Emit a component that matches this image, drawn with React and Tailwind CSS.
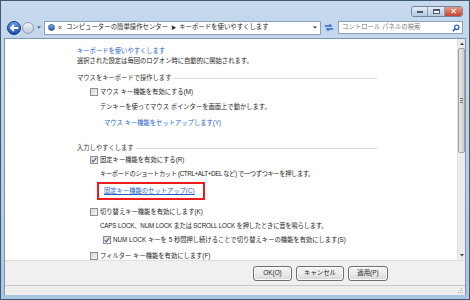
import React from "react";

const F = { fontFamily: '"Liberation Sans", "Noto Sans CJK JP", sans-serif' };

function Cb({ checked }) {
  return (
    <span className="w-[8px] h-[8px] border border-[#8f8f8f] bg-linear-to-br from-[#d6d6d6] to-[#f8f8f8] flex items-center justify-center shrink-0 mr-[2px]">
      {checked && (
        <svg width="6" height="6" viewBox="0 0 6 6">
          <path d="M0.8 3.2 L2.3 4.8 L5.3 0.8" stroke="#4a5f97" strokeWidth="1.1" fill="none" />
        </svg>
      )}
    </span>
  );
}

function Btn({ children, w }) {
  return (
    <div className={`${w} h-[15px] border border-[#707070] rounded-[3px] bg-linear-to-b from-[#f3f3f3] via-[#ebebeb] to-[#d7d7d7] shadow-[inset_0_0_0_1px_#fcfcfc] flex items-center justify-center text-[6.4px] text-[#1a1a1a]`}>
      {children}
    </div>
  );
}

export default function App() {
  return (
    <div style={F} className="w-[470px] h-[300px] overflow-hidden bg-linear-to-b from-[#c6d8ec] via-[#bcd2ea] to-[#a9c6e0] border border-[#3e5a72] flex flex-col text-[#1e1e1e]">
      {/* title bar */}
      <div className="h-[17px] flex items-start justify-end pr-[6px] pt-[5px] shrink-0">
        <div className="flex h-[11px] rounded-[3px] border border-[#6f86a0] overflow-hidden">
          <div className="w-[16px] bg-linear-to-b from-[#e4ecf5] to-[#b7c9dd] flex items-center justify-center border-r border-[#8aa0b8]">
            <div className="w-[6px] h-[2px] bg-[#fff] border border-[#4a5a6c]" />
          </div>
          <div className="w-[17px] bg-linear-to-b from-[#e4ecf5] to-[#b7c9dd] flex items-center justify-center border-r border-[#8aa0b8]">
            <div className="w-[7px] h-[5px] border border-[#4a5a6c] border-t-2 bg-white" />
          </div>
          <div className="w-[17px] bg-linear-to-b from-[#e49a87] to-[#c2412d] flex items-center justify-center text-white text-[8px] font-bold leading-none" style={{ fontFamily: '"DejaVu Sans", sans-serif' }}>
            ✕
          </div>
        </div>
      </div>
      {/* nav row */}
      <div className="h-[19px] flex items-center pl-[6px] pr-[6px] shrink-0">
        <div className="w-[14px] h-[14px] shrink-0 rounded-full bg-[#2f63c6] bg-linear-to-b from-[#6b9be6] to-[#1c4fb0] border border-[#1a3d80] flex items-center justify-center">
          <svg width="9" height="8" viewBox="0 0 9 8">
            <path d="M4 0.8 L1 4 L4 7.2 M1.3 4 H8.2" stroke="white" strokeWidth="1.8" fill="none" />
          </svg>
        </div>
        <div className="w-[12px] h-[12px] shrink-0 rounded-full bg-linear-to-b from-[#f0f4f8] to-[#bcc8d4] border border-[#8da0b3] ml-[1px]" />
        <svg width="6" height="5" viewBox="0 0 6 5" className="ml-[2px] shrink-0">
          <path d="M1 1.5 L3 3.5 L5 1.5 Z" fill="#2a5ab0" />
        </svg>
        <div className="ml-[2px] w-[277px] shrink-0 h-[14px] bg-white border border-[#8da2b8] flex items-center pl-[3px]">
          <div className="w-[7px] h-[7px] rounded-full bg-linear-to-b from-[#7fa8e6] to-[#2b5db8] border border-[#355a9a]" />
          <span className="ml-[3px] text-[7px] text-[#444] leading-none">«</span>
          <span className="ml-[4px] text-[6.4px] whitespace-nowrap leading-none">コンピューターの簡単操作センター</span>
          <span className="ml-[3px] text-[5px] text-[#333] leading-none">▶</span>
          <span className="ml-[3px] text-[6.4px] whitespace-nowrap leading-none">キーボードを使いやすくします</span>
          <div className="flex-1" />
          <svg width="6" height="5" viewBox="0 0 6 5" className="mr-[2px]">
            <path d="M1 1.5 L3 3.5 L5 1.5 Z" fill="#333" />
          </svg>
        </div>
        <div className="w-[16px] h-[14px] shrink-0 flex items-center justify-center">
          <svg width="10" height="9" viewBox="0 0 10 9">
            <path d="M1 3 H7 L5.5 1.3 M9 6 H3 L4.5 7.7" stroke="#2d6bd0" strokeWidth="1.3" fill="none" />
          </svg>
        </div>
        <div className="ml-[1px] flex-1 h-[13px] bg-white border border-[#8da2b8] flex items-center pl-[3px] pr-[2px]">
          <span className="text-[6.4px] text-[#7a7a7a] whitespace-nowrap leading-none">コントロール パネルの検索</span>
          <div className="flex-1" />
          <svg width="8" height="8" viewBox="0 0 8 8">
            <circle cx="4.8" cy="3.2" r="2.2" stroke="#1f55b8" strokeWidth="1.2" fill="none" />
            <path d="M3.2 4.8 L0.8 7.2" stroke="#1f55b8" strokeWidth="1.5" />
          </svg>
        </div>
      </div>
      {/* body */}
      <div className="flex-1 flex flex-col mx-[3px] mt-[1px] border border-[#7f97ad] border-b-0 bg-[#f0f0f0] overflow-hidden">
        <div className="h-[221px] flex shrink-0 bg-white">
          <div className="flex-1 overflow-hidden pl-[72px] pt-[7px] text-[6.3px] leading-[10px] whitespace-nowrap">
            <div className="h-[10px] text-[#1f5fc8]">キーボードを使いやすくします</div>
            <div className="h-[10px]">選択された設定は毎回のログオン時に自動的に開始されます。</div>
            <div className="h-[10px] mt-[7px] w-[300px] flex items-center text-[#333]">
              <span>マウスをキーボードで操作します</span>
              <div className="ml-[2px] flex-1 h-px bg-[#d8dde2]" />
            </div>
            <div className="h-[10px] mt-[4px] ml-[13px] flex items-center"><Cb />マウス キー機能を有効にする(M)</div>
            <div className="h-[10px] mt-[5px] ml-[23px]">テンキーを使ってマウス ポインターを画面上で動かします。</div>
            <div className="h-[10px] mt-[6px] ml-[27px] text-[#1f5fc8]">マウス キー機能をセットアップします(Y)</div>
            <div className="h-[10px] mt-[15px] w-[300px] flex items-center text-[#333]">
              <span>入力しやすくします</span>
              <div className="ml-[2px] flex-1 h-px bg-[#d8dde2]" />
            </div>
            <div className="h-[10px] mt-[2px] ml-[13px] flex items-center"><Cb checked />固定キー機能を有効にする(R)</div>
            <div className="h-[10px] mt-[4px] ml-[23px] tracking-[-0.4px]">キーボードのショートカット (CTRL+ALT+DEL など) で一つずつキーを押します。</div>
            <div className="mt-[3px] ml-[20px] w-[108px] h-[18px] border-2 border-[#ee1c1c] flex items-center pl-[5px]">
              <span className="text-[#1f5fc8] underline leading-[10px]">固定キー機能のセットアップ(C)</span>
            </div>
            <div className="h-[10px] mt-[7px] ml-[13px] flex items-center"><Cb />切り替えキー機能を有効にします(K)</div>
            <div className="h-[10px] mt-[4px] ml-[23px] tracking-[-0.2px]">CAPS LOCK、NUM LOCK または SCROLL LOCK を押したときに音を鳴らします。</div>
            <div className="h-[10px] mt-[4px] ml-[26px] flex items-center"><Cb checked />NUM LOCK キーを 5 秒間押し続けることで切り替えキーの機能を有効にします(S)</div>
            <div className="h-[10px] mt-[6px] ml-[13px] flex items-center"><Cb />フィルター キー機能を有効にします(F)</div>
          </div>
          {/* scrollbar */}
          <div className="w-[8px] bg-[#ececec] border-l border-[#e2e2e2] flex flex-col items-center">
            <div className="h-[9px] w-full flex items-center justify-center">
              <svg width="4" height="3" viewBox="0 0 4 3"><path d="M0 3 L2 0.5 L4 3 Z" fill="#444" /></svg>
            </div>
            <div className="w-[7px] h-[105px] rounded-[2px] border border-[#a0a0a0] bg-linear-to-r from-[#e8e8e8] via-[#dcdcdc] to-[#cfcfcf] flex flex-col items-center justify-center gap-[1px]">
              <div className="w-[3px] h-px bg-[#777]" />
              <div className="w-[3px] h-px bg-[#777]" />
              <div className="w-[3px] h-px bg-[#777]" />
            </div>
            <div className="flex-1" />
            <div className="h-[9px] w-full flex items-center justify-center">
              <svg width="4" height="3" viewBox="0 0 4 3"><path d="M0 0 L2 2.5 L4 0 Z" fill="#444" /></svg>
            </div>
          </div>
        </div>
        {/* button bar */}
        <div className="h-[25px] shrink-0 bg-[#f0f0f0] border-t border-[#dfdfdf] flex items-center pl-[248px] gap-[4px]">
          <Btn w="w-[39px]">OK(O)</Btn>
          <Btn w="w-[48px]">キャンセル</Btn>
          <Btn w="w-[40px]">適用(P)</Btn>
        </div>
        {/* status bar */}
        <div className="flex-1 bg-[#f0efed] border-t border-[#c8c8c8] flex items-end justify-end pr-[2px] pb-[2px]">
          <svg width="5" height="5" viewBox="0 0 5 5">
            <rect x="3" y="0" width="1" height="1" fill="#aaa" />
            <rect x="1.5" y="2" width="1" height="1" fill="#aaa" />
            <rect x="3.5" y="2" width="1" height="1" fill="#aaa" />
            <rect x="0" y="4" width="1" height="1" fill="#aaa" />
            <rect x="2" y="4" width="1" height="1" fill="#aaa" />
            <rect x="4" y="4" width="1" height="1" fill="#aaa" />
          </svg>
        </div>
      </div>
      <div className="h-[4px] shrink-0" />
    </div>
  );
}
